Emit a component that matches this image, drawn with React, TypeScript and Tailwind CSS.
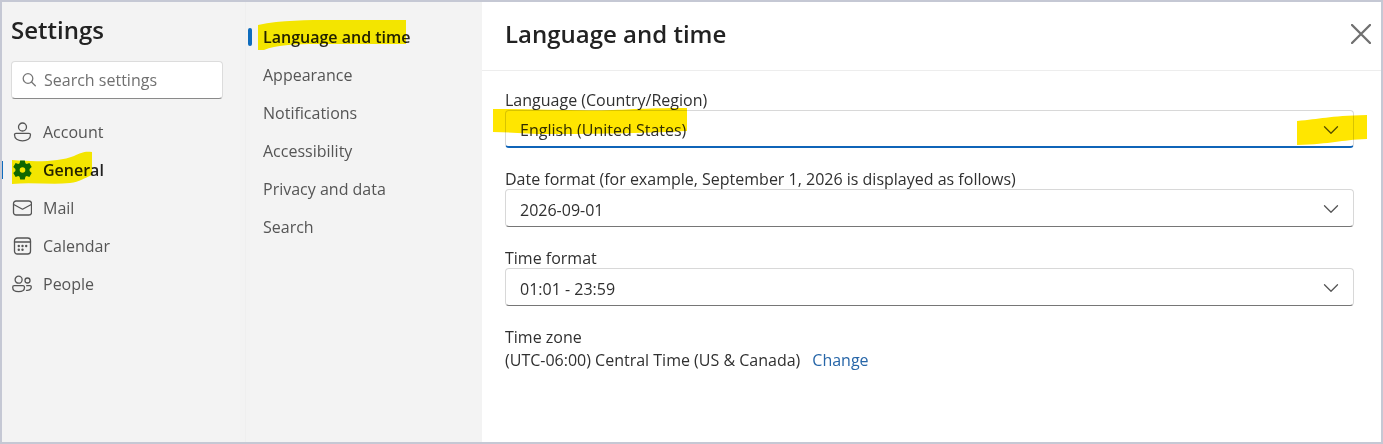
import type { ReactNode, SVGProps } from "react";
import clsx from "clsx";

function Icon({ children, className, ...props }: SVGProps<SVGSVGElement>) {
  return (
    <svg
      viewBox="0 0 20 20"
      fill="none"
      stroke="currentColor"
      strokeWidth={1.3}
      strokeLinecap="round"
      strokeLinejoin="round"
      aria-hidden="true"
      className={clsx("shrink-0", className)}
      {...props}
    >
      {children}
    </svg>
  );
}

const AccountIcon = (
  <Icon className="size-5">
    <circle cx="10.5" cy="5" r="4" />
    <path d="M4 11.300h13a1.500 1.500 0 0 1 1.500 1.500c0 3.800-3.400 6-8 6s-8-2.200-8-6A1.500 1.500 0 0 1 4 11.300Z" />
  </Icon>
);

const GeneralIcon = (
  <Icon className="size-5 text-[#0f6c10]" fill="currentColor" stroke="none">
    <path
      fillRule="evenodd"
      d="M8.200.5h4.600l.6 2.800 1.300.7 2.700-.9 2.300 4-2.100 1.900v2l2.100 1.900-2.300 4-2.700-.9-1.300.7-.6 2.800H8.200l-.6-2.800-1.300-.7-2.700.9-2.300-4L3.400 11V9L1.300 7.100l2.300-4 2.700.9 1.300-.7L8.200.5ZM10.500 7.200a2.800 2.800 0 1 0 0 5.600 2.800 2.800 0 0 0 0-5.600Z"
    />
  </Icon>
);

const MailIcon = (
  <Icon className="size-5">
    <rect x="1.5" y="3" width="18" height="14" rx="2.6" />
    <path d="m1.700 6.500 8.800 4.700 8.800-4.700" />
  </Icon>
);

const CalendarIcon = (
  <Icon className="size-5">
    <rect x="2.5" y="2" width="16" height="16" rx="2.800" />
    <path d="M2.500 6h16" />
    <g fill="currentColor" stroke="none">
      <circle cx="6.800" cy="10" r="1.200" />
      <circle cx="10.500" cy="10" r="1.200" />
      <circle cx="14.200" cy="10" r="1.200" />
      <circle cx="6.800" cy="13.800" r="1.200" />
      <circle cx="10.500" cy="13.800" r="1.200" />
    </g>
  </Icon>
);

const PeopleIcon = (
  <Icon className="size-5">
    <circle cx="6.600" cy="5.700" r="3.500" />
    <circle cx="15.500" cy="6.500" r="2.500" />
    <path d="M2.200 11.700H11a1.500 1.500 0 0 1 1.500 1.500c0 2.900-2.600 4.500-5.900 4.500S.7 16.100.7 13.200a1.500 1.500 0 0 1 1.500-1.500ZM14.700 11.700H18a1.300 1.300 0 0 1 1.300 1.300c0 2.300-2 3.600-4.800 3.300" />
  </Icon>
);

const categories = [
  { label: "Account", icon: AccountIcon },
  { label: "General", icon: GeneralIcon, active: true },
  { label: "Mail", icon: MailIcon },
  { label: "Calendar", icon: CalendarIcon },
  { label: "People", icon: PeopleIcon },
];

const sections = [
  "Language and time",
  "Appearance",
  "Notifications",
  "Accessibility",
  "Privacy and data",
  "Search",
];

// Hand-drawn marker stroke laid over the content below it
function Marker({ d, viewBox, className }: { d: string; viewBox: string; className: string }) {
  return (
    <svg
      viewBox={viewBox}
      preserveAspectRatio="none"
      aria-hidden="true"
      className={clsx("pointer-events-none absolute mix-blend-multiply", className)}
    >
      <path d={d} fill="currentColor" />
    </svg>
  );
}

type SelectFieldProps = {
  id: string;
  label: string;
  value: string;
  focused?: boolean;
  children?: ReactNode;
};

function SelectField({ id, label, value, focused, children }: SelectFieldProps) {
  return (
    <div className="flex flex-col">
      <label htmlFor={id} className="leading-5">
        {label}
      </label>
      <div className="relative">
        <select
          id={id}
          className={clsx(
            "block h-[38px] w-full appearance-none rounded border border-[#d8d8d8] bg-white pt-[3px] pr-10 pl-[14px] outline-none",
            focused ? "border-b-2 border-b-[#0f64b8]" : "border-b-[#767676]",
          )}
        >
          <option>{value}</option>
        </select>
        <Icon className="pointer-events-none absolute top-3 right-[15px] size-4 text-[#555]" viewBox="0 0 16 16">
          <path d="m1.500 4.800 6.500 6.500 6.500-6.500" />
        </Icon>
        {children}
      </div>
    </div>
  );
}

export default function App() {
  return (
    <div className="flex min-h-screen border-2 border-[#c5c8d4] bg-white font-['Open_Sans','Noto_Sans',sans-serif] text-base text-[#303030]">
      <aside className="w-[244px] shrink-0 border-r border-[#efefef] bg-[#f3f3f3] pt-3">
        <h1 className="pl-[9px] text-2xl leading-8 font-semibold text-[#222]">Settings</h1>
        <div className="relative mt-[15px] mr-[22px] ml-[9px]">
          <Icon className="absolute top-3 left-[11px] size-[14px] text-[#777]" viewBox="0 0 14 14">
            <circle cx="6" cy="5.500" r="4.800" />
            <path d="m9.500 9 3.800 3.800" />
          </Icon>
          <input
            type="search"
            aria-label="Search settings"
            placeholder="Search settings"
            className="block h-[38px] w-full rounded border border-[#dcdcdc] border-b-[#8a8a8a] bg-white pr-2 pl-8 outline-none placeholder:text-[#707070]"
          />
        </div>
        <nav aria-label="Settings categories" className="mt-[14px]">
          {categories.map(({ label, icon, active }) => (
            <a
              key={label}
              href="#"
              aria-current={active ? "page" : undefined}
              className={clsx(
                "relative flex h-[38px] items-center gap-[11px] pl-[10px]",
                active ? "font-semibold text-[#222]" : "text-[#555]",
              )}
            >
              {active && <span className="absolute left-0 h-[18px] w-px bg-[#0f6cbd]" />}
              {icon}
              {label}
              {active && (
                <Marker
                  viewBox="0 0 80 34"
                  d="M0 9C22 11 47 11 62 5 69 2 72 0 80 1V24C72 27 68 31 58 32 40 34 20 31 0 33Z"
                  className="top-0 left-[10px] h-[34px] w-20 text-[#fff100]"
                />
              )}
            </a>
          ))}
        </nav>
      </aside>

      <nav aria-label="General settings" className="w-[236px] shrink-0 bg-[#f3f3f3] pt-4">
        {sections.map((label, index) => (
          <a
            key={label}
            href="#"
            aria-current={index === 0 ? "page" : undefined}
            className={clsx(
              "relative flex h-[38px] items-center pl-[17px]",
              index === 0 ? "font-semibold text-[#222]" : "text-[#555]",
            )}
          >
            {index === 0 && <span className="absolute left-[2px] h-[18px] w-1 rounded-sm bg-[#0f6cbd]" />}
            {label}
            {index === 0 && (
              <Marker
                viewBox="0 0 148 30"
                d="M0 5C24 0 48 0 75 0H148V24H60C35 24 18 25 6 30H0Z"
                className="top-[2px] left-3 h-[30px] w-[148px] text-[#fff100]"
              />
            )}
          </a>
        ))}
      </nav>

      <main className="min-w-0 flex-1">
        <header className="flex h-[69px] items-center justify-between border-b border-[#ededed] pr-[10px] pb-1 pl-[23px]">
          <h2 className="text-2xl font-semibold text-[#222]">Language and time</h2>
          <button type="button" aria-label="Close" className="text-[#707070]">
            <Icon className="size-5" strokeWidth={2.3}>
              <path d="m1 1 18 18M19 1 1 19" />
            </Icon>
          </button>
        </header>
        <form className="flex flex-col gap-[21px] pt-[19px] pr-[27px] pb-10 pl-[23px]">
          <SelectField id="language" label="Language (Country/Region)" value="English (United States)" focused>
            <Marker
              viewBox="0 0 194 26"
              d="M0 1C40 1 80 3 120 2 145 1 160 0 194 0V23C160 25 110 26 55 26 35 26 18 24 0 24Z"
              className="top-[-2px] left-[-12px] h-[26px] w-[194px] text-[#ffe600]"
            />
            <Marker
              viewBox="0 0 70 30"
              d="M0 6C24 4 30 1 70 0V24C42 25 36 29 0 30Z"
              className="top-[5px] right-[-13px] h-[30px] w-[70px] text-[#ffe600]"
            />
          </SelectField>
          <SelectField
            id="date-format"
            label="Date format (for example, September 1, 2026 is displayed as follows)"
            value="2026-09-01"
          />
          <SelectField id="time-format" label="Time format" value="01:01 - 23:59" />
          <div className="flex flex-col gap-[3px] leading-5">
            <p>Time zone</p>
            <p className="flex gap-3">
              (UTC-06:00) Central Time (US &amp; Canada)
              <a href="#" className="text-[#2766a8]">
                Change
              </a>
            </p>
          </div>
        </form>
      </main>
    </div>
  );
}
